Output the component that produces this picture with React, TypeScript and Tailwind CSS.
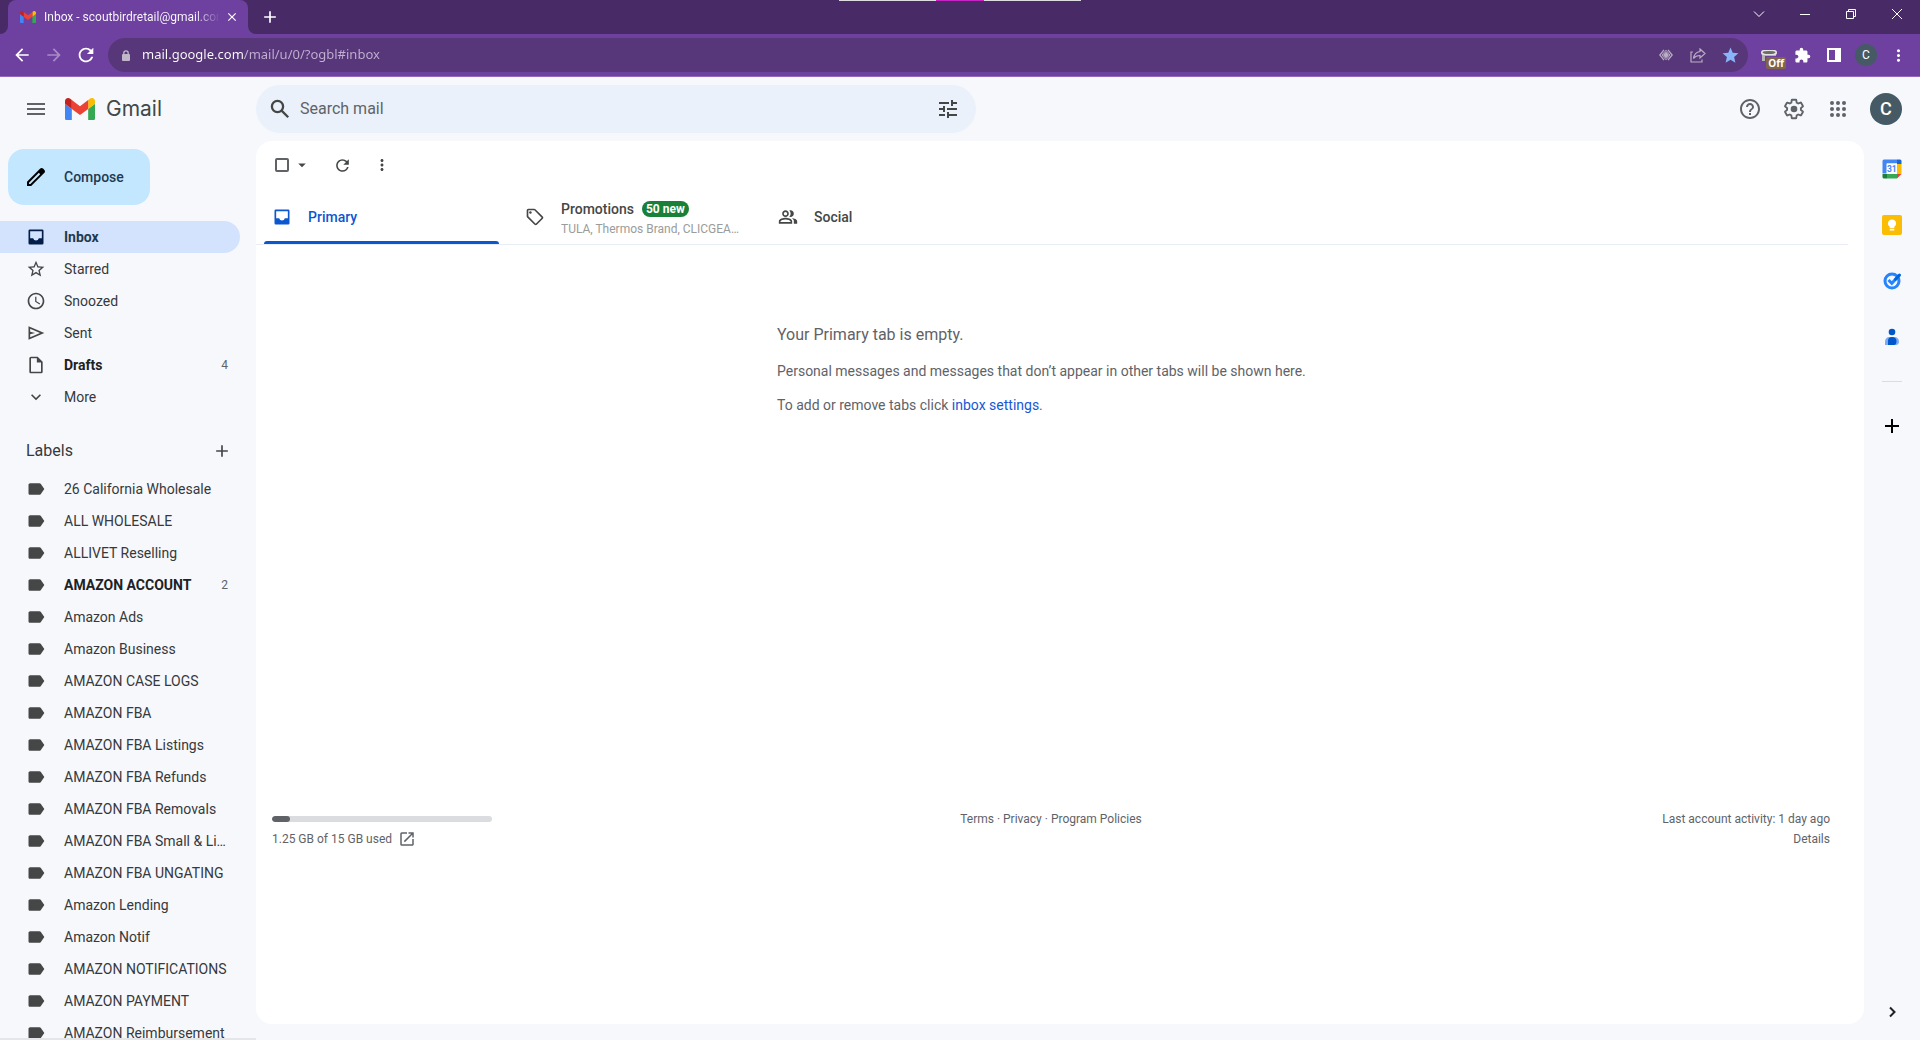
import React from "react";
import {
  MdAdd,
  MdArrowBack,
  MdArrowDropDown,
  MdArrowForward,
  MdClose,
  MdExtension,
  MdHelpOutline,
  MdKeyboardArrowDown,
  MdLabel,
  MdMenu,
  MdMoreVert,
  MdOpenInNew,
  MdOutlineInsertDriveFile,
  MdOutlinePeopleAlt,
  MdOutlineSell,
  MdRefresh,
  MdSchedule,
  MdStar,
  MdStarBorder,
  MdTune,
} from "react-icons/md";

type IconProps = { size?: number; className?: string };

function InboxIcon({ size = 20, className }: IconProps) {
  return (
    <svg width={size} height={size} viewBox="0 0 24 24" fill="currentColor" className={className}>
      <path d="M19.500 3h-15A1.500 1.500 0 003 4.500v15A1.500 1.500 0 004.500 21h15a1.500 1.500 0 001.500-1.500v-15A1.500 1.500 0 0019.500 3zM19 13.500h-3.600a3.500 3.500 0 01-6.800 0H5V5h14z" />
    </svg>
  );
}

function SendIcon({ size = 20, className }: IconProps) {
  return (
    <svg width={size} height={size} viewBox="0 0 24 24" fill="currentColor" className={className}>
      <path d="M3 20V4l19 8zm2-3l11.850-5L5 7v3.500l6 1.500-6 1.500z" />
    </svg>
  );
}

function SearchIcon({ size = 24 }: IconProps) {
  return (
    <svg width={size} height={size} viewBox="0 0 24 24" fill="none" stroke="currentColor" strokeWidth="2.300">
      <circle cx="9.500" cy="9.500" r="5.600" />
      <path d="M13.600 13.600l6.600 6.600" />
    </svg>
  );
}

function SettingsIcon({ size = 24 }: IconProps) {
  return (
    <svg width={size} height={size} viewBox="-1 -1 26 26" fill="currentColor">
      <path
        fill="none"
        stroke="currentColor"
        strokeWidth="2"
        d="M19.430 12.980c.04-.32.07-.64.07-.98 0-.34-.03-.66-.07-.98l2.110-1.650c.19-.15.24-.42.12-.64l-2-3.460a.5.5 0 00-.61-.22l-2.490 1c-.52-.4-1.080-.73-1.690-.98l-.38-2.650A.488.488 0 0014 2h-4c-.25 0-.46.18-.49.42l-.38 2.650c-.61.25-1.170.59-1.690.98l-2.490-1a.566.566 0 00-.18-.03c-.17 0-.34.09-.43.25l-2 3.460c-.13.22-.07.49.12.64l2.110 1.650c-.04.32-.07.65-.07.98 0 .33.03.66.07.98l-2.110 1.650c-.19.15-.24.42-.12.64l2 3.460a.5.5 0 00.61.22l2.490-1c.52.4 1.080.73 1.690.98l.38 2.650c.03.24.24.42.49.42h4c.25 0 .46-.18.49-.42l.38-2.650c.61-.25 1.170-.59 1.690-.98l2.490 1c.06.02.12.03.18.03.17 0 .34-.09.43-.25l2-3.460c.12-.22.07-.49-.12-.64z"
      />
      <circle cx="12" cy="12" r="3.600" />
    </svg>
  );
}

const folders = [
  { name: "Inbox", icon: InboxIcon, active: true },
  { name: "Starred", icon: MdStarBorder },
  { name: "Snoozed", icon: MdSchedule },
  { name: "Sent", icon: SendIcon },
  { name: "Drafts", icon: MdOutlineInsertDriveFile, count: 4 },
  { name: "More", icon: MdKeyboardArrowDown },
];

const labels = [
  { name: "26 California Wholesale" },
  { name: "ALL WHOLESALE" },
  { name: "ALLIVET Reselling" },
  { name: "AMAZON ACCOUNT", count: 2 },
  { name: "Amazon Ads" },
  { name: "Amazon Business" },
  { name: "AMAZON CASE LOGS" },
  { name: "AMAZON FBA" },
  { name: "AMAZON FBA Listings" },
  { name: "AMAZON FBA Refunds" },
  { name: "AMAZON FBA Removals" },
  { name: "AMAZON FBA Small & Light" },
  { name: "AMAZON FBA UNGATING" },
  { name: "Amazon Lending" },
  { name: "Amazon Notif" },
  { name: "AMAZON NOTIFICATIONS" },
  { name: "AMAZON PAYMENT" },
  { name: "AMAZON Reimbursement" },
];

function GmailLogo({ className }: { className?: string }) {
  return (
    <svg viewBox="52 42 88 66" className={className} aria-hidden="true">
      <path fill="#4285f4" d="M58 108h14V74L52 59v43c0 3.320 2.690 6 6 6" />
      <path fill="#34a853" d="M120 108h14c3.320 0 6-2.690 6-6V59l-20 15" />
      <path fill="#fbbc04" d="M120 48v26l20-15v-8c0-7.420-8.470-11.650-14.400-7.200" />
      <path fill="#ea4335" d="M72 74V48l24 18 24-18v26L96 92" />
      <path fill="#c5221f" d="M52 51v8l20 15V48l-5.600-4.200c-5.940-4.450-14.400-.22-14.400 7.200" />
    </svg>
  );
}

function IconButton({
  label,
  className = "",
  children,
}: {
  label: string;
  className?: string;
  children: React.ReactNode;
}) {
  return (
    <button aria-label={label} className={`flex shrink-0 items-center justify-center ${className}`}>
      {children}
    </button>
  );
}

function TabStrip() {
  return (
    <div className="relative flex h-[34px] items-stretch bg-[#472a66] text-white">
      {/* Share indicator hanging from the top edge */}
      <div className="absolute top-0 left-1/2 flex h-px w-[242px] -translate-x-1/2 justify-center bg-[#dfdbe2]">
        <span className="w-12 bg-[#c724c4]" />
      </div>
      <div className="flex w-2 bg-[#6e41a0]">
        <span className="flex-1 rounded-br-lg bg-[#472a66]" />
      </div>
      <div className="flex w-60 items-center rounded-t-lg bg-[#6e41a0] pr-2 pl-3">
        <GmailLogo className="w-4 shrink-0" />
        <span className="ml-2 flex-1 overflow-hidden bg-linear-to-r from-white from-85% to-transparent bg-clip-text text-xs whitespace-nowrap text-transparent">
          Inbox - scoutbirdretail@gmail.com
        </span>
        <IconButton label="Close tab" className="ml-1 size-4">
          <MdClose size={14} />
        </IconButton>
      </div>
      <div className="flex w-2 bg-[#6e41a0]">
        <span className="flex-1 rounded-bl-lg bg-[#472a66]" />
      </div>
      <IconButton label="New tab" className="w-7">
        <MdAdd size={20} />
      </IconButton>
      <div className="ml-auto flex">
        <IconButton label="Search tabs" className="h-7 w-[46px]">
          <svg width="12" height="12" viewBox="0 0 12 12" fill="none" stroke="currentColor">
            <path d="M1 3.500l5 5 5-5" />
          </svg>
        </IconButton>
        <IconButton label="Minimize" className="h-7 w-[46px]">
          <svg width="10" height="10" viewBox="0 0 10 10" stroke="currentColor">
            <path d="M0 5.500h10" />
          </svg>
        </IconButton>
        <IconButton label="Restore" className="h-7 w-[46px]">
          <svg width="10" height="10" viewBox="0 0 10 10" fill="none" stroke="currentColor">
            <path d="M.5 2.500h7v7h-7zM2.500 2.500v-2h7v7h-2" />
          </svg>
        </IconButton>
        <IconButton label="Close" className="h-7 w-[46px]">
          <svg width="10" height="10" viewBox="0 0 10 10" fill="none" stroke="currentColor">
            <path d="M0 0l10 10M10 0L0 10" />
          </svg>
        </IconButton>
      </div>
    </div>
  );
}

function AddressBar() {
  return (
    <div className="flex h-[43px] items-center border-b border-[#9168bd] bg-[#6e41a0] pr-[6px] text-white">
      <IconButton label="Back" className="ml-2 size-7">
        <MdArrowBack size={20} />
      </IconButton>
      <IconButton label="Forward" className="ml-1 size-7 text-[#a88cc6]">
        <MdArrowForward size={20} />
      </IconButton>
      <IconButton label="Reload" className="ml-1 size-7">
        <MdRefresh size={22} />
      </IconButton>
      <div className="ml-2 flex h-[34px] flex-1 items-center rounded-full bg-[#573779] pr-[2px] pl-[14px]">
        <svg width="8" height="11" viewBox="0 0 8 11" className="shrink-0 text-[#c0b8c8]">
          <rect y="4" width="8" height="7" rx="1" fill="currentColor" />
          <path d="M1.800 4.500V3a2.200 2.200 0 014.400 0v1.500" fill="none" stroke="currentColor" strokeWidth="1.300" />
        </svg>
        {/* Host part in white, path dimmed */}
        <input
          aria-label="Address"
          defaultValue="mail.google.com/mail/u/0/?ogbl#inbox"
          className="ml-3 flex-1 bg-linear-to-r from-white from-[102px] to-[#c2b1d3] to-[102px] bg-clip-text font-['Noto_Sans',sans-serif] text-[13px] text-transparent outline-none"
        />
        <IconButton label="Preview" className="size-8 text-[#b9aec4]">
          <svg width="14" height="12" viewBox="0 0 14 12" fill="none" stroke="currentColor">
            <path d="M5 .8L.8 6 5 11.200M9 .8L13.200 6 9 11.200" strokeWidth="1.200" />
            <path d="M7 1.200L3 6l4 4.800L11 6z" strokeWidth="1" />
            <path d="M7 2.500L4 6l3 3.500L10 6z" fill="currentColor" stroke="none" />
          </svg>
        </IconButton>
        <IconButton label="Share this page" className="size-8 text-[#b9aec4]">
          <svg width="16" height="15" viewBox="0 0 16 15" fill="none" stroke="currentColor" strokeWidth="1.200">
            <path d="M3 4H1v10h11v-2.500" />
            <path d="M10 1l5 4.500-5 4.500V7.500c-3 0-5 1-6.500 3C4 7 6 4 10 3.500z" />
          </svg>
        </IconButton>
        <IconButton label="Bookmark" className="size-8 text-[#8ab4f8]">
          <MdStar size={19} />
        </IconButton>
      </div>
      <button aria-label="Extension, off" className="relative ml-1 flex h-9 w-[34px] items-center justify-center">
        <svg width="18" height="14" viewBox="0 0 18 14">
          <path d="M2 4h14v4H5v5H2z" fill="#b8b4b4" />
          <rect x="1" y="2" width="16" height="5" rx="2.500" fill="#e4e4e4" />
          <ellipse cx="9" cy="4.500" rx="6.500" ry="1.600" fill="#6d6d66" />
        </svg>
        <span className="absolute right-0 bottom-1 rounded-xs bg-[#80654a] px-[2px] font-['Open_Sans',sans-serif] text-[10px] leading-3 font-bold">
          Off
        </span>
      </button>
      <IconButton label="Extensions" className="size-8">
        <MdExtension size={17} />
      </IconButton>
      <IconButton label="Side panel" className="size-8">
        <svg width="14" height="14" viewBox="0 0 14 14" fill="currentColor">
          <path fillRule="evenodd" d="M0 0h14v14H0zM2 2v10h6V2z" />
        </svg>
      </IconButton>
      <IconButton label="Profile" className="size-8">
        <span className="flex size-[22px] items-center justify-center rounded-full bg-[#455a64] text-xs">C</span>
      </IconButton>
      <IconButton label="Browser menu" className="size-8">
        <MdMoreVert size={19} />
      </IconButton>
    </div>
  );
}

function Header() {
  return (
    <header className="flex h-16 shrink-0 items-center text-[#5f6368]">
      <div className="flex w-64 shrink-0 items-center pl-6">
        <IconButton label="Main menu" className="size-6">
          <MdMenu size={24} />
        </IconButton>
        <a href="#inbox" className="ml-[17px] flex items-center gap-[11px]">
          <GmailLogo className="w-[30px]" />
          <span className="font-['Inter',sans-serif] text-[21px] text-[#444746]">Gmail</span>
        </a>
      </div>
      <form className="flex h-12 w-[720px] items-center rounded-full bg-[#eaf1fb] pr-4 pl-3 text-[#444746]">
        <IconButton label="Search" className="size-6">
          <SearchIcon />
        </IconButton>
        <input
          aria-label="Search mail"
          placeholder="Search mail"
          className="ml-2 flex-1 bg-transparent text-base outline-none placeholder:text-[#5f6368]"
        />
        <IconButton label="Show search options" className="size-6">
          <MdTune size={24} />
        </IconButton>
      </form>
      <div className="ml-auto flex items-center gap-5 pr-[18px]">
        <IconButton label="Support" className="size-6">
          <MdHelpOutline size={24} />
        </IconButton>
        <IconButton label="Settings" className="size-6">
          <SettingsIcon />
        </IconButton>
        <IconButton label="Google apps" className="size-6">
          <svg width="24" height="24" viewBox="0 0 24 24" fill="currentColor">
            {[6, 12, 18].map((y) => [6, 12, 18].map((x) => <circle key={`${x}-${y}`} cx={x} cy={y} r="2" />))}
          </svg>
        </IconButton>
        <button
          aria-label="Google Account"
          className="flex size-8 items-center justify-center rounded-full bg-[#455a64] text-lg font-medium text-white"
        >
          C
        </button>
      </div>
    </header>
  );
}

function Sidebar() {
  return (
    <aside className="flex w-64 shrink-0 flex-col overflow-hidden border-b-2 border-[#e4e6ea] pt-2 text-sm text-[#36393c]">
      <button className="ml-2 flex h-14 w-[142px] shrink-0 items-center gap-4 rounded-2xl bg-[#c2e7ff] pl-4 font-medium text-[#1f3a50]">
        <svg width="24" height="24" viewBox="0 0 24 24" fill="#000">
          <path d="M20.410 4.940l-1.350-1.350c-.78-.78-2.050-.78-2.830 0L3 16.820V21h4.180L20.410 7.770c.79-.78.79-2.050 0-2.830zM6.410 19.060L5 19v-1.360l9.820-9.820 1.410 1.410-9.820 9.830z" />
        </svg>
        Compose
      </button>
      <nav className="mt-4 shrink-0" aria-label="Folders">
        {folders.map(({ name, icon: Icon, active, count }) => (
          <a
            key={name}
            href={`#${name.toLowerCase()}`}
            className={`mr-4 flex h-8 items-center pr-3 pl-[26px] ${
              active ? "rounded-r-full bg-[#d3e3fd] font-bold text-[#1f3a50]" : count ? "font-bold text-[#202124]" : ""
            }`}
          >
            <Icon size={20} className={active ? "text-[#041e49]" : "text-[#444746]"} />
            <span className="ml-[18px] flex-1">{name}</span>
            {count && <span className="text-xs font-normal text-[#5f6368]">{count}</span>}
          </a>
        ))}
      </nav>
      <div className="mt-4 flex h-11 shrink-0 items-center justify-between pr-6 pl-[26px]">
        <h2 className="text-base">Labels</h2>
        <IconButton label="Create new label" className="size-5 text-[#444746]">
          <MdAdd size={20} />
        </IconButton>
      </div>
      <nav className="min-h-0 flex-1 overflow-hidden" aria-label="Labels">
        {labels.map(({ name, count }) => (
          <a
            key={name}
            href="#label"
            className={`mr-4 flex h-8 items-center pr-3 pl-[26px] ${count ? "font-bold text-[#202124]" : ""}`}
          >
            <MdLabel size={20} className="shrink-0 text-[#444746]" />
            <span className="ml-[18px] flex-1 truncate">{name}</span>
            {count && <span className="text-xs font-normal text-[#5f6368]">{count}</span>}
          </a>
        ))}
      </nav>
    </aside>
  );
}

function Mailbox() {
  return (
    <main className="mb-4 flex min-w-0 flex-1 flex-col rounded-2xl bg-white text-[#444746]">
      <div className="flex h-12 shrink-0 items-center pl-[19px]">
        <input
          type="checkbox"
          aria-label="Select"
          className="size-[14px] appearance-none rounded-xs border-2 border-[#5f6368]"
        />
        <IconButton label="Select options" className="ml-[3px] size-5">
          <MdArrowDropDown size={18} />
        </IconButton>
        <IconButton label="Refresh" className="ml-5 size-5">
          <MdRefresh size={19} />
        </IconButton>
        <IconButton label="More" className="ml-5 size-5">
          <MdMoreVert size={18} />
        </IconButton>
      </div>
      <div role="tablist" className="mr-4 flex h-14 shrink-0 border-b border-[#e9eef6] text-sm font-medium">
        <button role="tab" aria-selected="true" className="flex w-[253px] flex-col pt-[3px] pl-2 text-[#0b57d0]">
          <span className="flex flex-1 items-center gap-4 pl-2">
            <InboxIcon />
            Primary
          </span>
          <span className="h-[3px] w-[235px] rounded-t-sm bg-[#0b57d0]" />
        </button>
        <button role="tab" aria-selected="false" className="flex w-[253px] items-center gap-4 pl-4 text-left">
          <MdOutlineSell size={20} className="shrink-0" />
          <span className="min-w-0 flex-1 pt-1">
            <span className="flex items-center gap-2 leading-5">
              Promotions
              <span className="rounded-full bg-[#188038] px-1 text-xs leading-4 font-bold text-white">50 new</span>
            </span>
            <span className="block w-[184px] truncate text-xs leading-5 font-normal text-[#9a9c9b]">
              TULA, Thermos Brand, CLICGEAR, Zappos
            </span>
          </span>
        </button>
        <button role="tab" aria-selected="false" className="flex w-[253px] items-center gap-4 pl-4">
          <MdOutlinePeopleAlt size={20} />
          Social
        </button>
      </div>
      <section className="flex h-[560px] shrink-0 flex-col items-center pt-[78px] pr-[26px] text-sm text-[#5f6368]">
        <div className="w-[540px] space-y-[14px]">
          <p className="text-base leading-6">Your Primary tab is empty.</p>
          <p>Personal messages and messages that don’t appear in other tabs will be shown here.</p>
          <p>
            To add or remove tabs click{" "}
            <a href="#settings" className="text-[#1558d6]">
              inbox settings
            </a>
            .
          </p>
        </div>
      </section>
      <footer className="grid grid-cols-3 pt-1 pr-[34px] pl-4 text-xs leading-5 text-[#5f6368]">
        <div>
          <div className="mt-[7px] h-[6px] w-[220px] overflow-hidden rounded-full bg-[#dadce0]">
            <div className="h-full rounded-full bg-[#5f6368]" style={{ width: `${(1.25 / 15) * 100}%` }} />
          </div>
          <div className="mt-[7px] flex items-center gap-[6px]">
            <span>1.25 GB of 15 GB used</span>
            <a href="#storage" aria-label="Manage storage">
              <MdOpenInNew size={18} />
            </a>
          </div>
        </div>
        <p className="text-center">
          <a href="#terms">Terms</a> · <a href="#privacy">Privacy</a> · <a href="#policies">Program Policies</a>
        </p>
        <div className="text-right">
          <p>Last account activity: 1 day ago</p>
          <a href="#details">Details</a>
        </div>
      </footer>
    </main>
  );
}

function SidePanel() {
  return (
    <aside className="flex w-14 shrink-0 flex-col items-center pt-[18px] pb-[18px]">
      <IconButton label="Calendar" className="size-5">
        <svg width="20" height="20" viewBox="0 0 20 20">
          <path d="M2 .5h13v4H5v10H.5V2A1.500 1.500 0 012 .5z" fill="#4285f4" />
          <path d="M15 .5h3A1.500 1.500 0 0119.500 2v3H15z" fill="#1967d2" />
          <path d="M15 5h4.500v10H15z" fill="#fbbc04" />
          <path d="M5 15h10v4.500H5z" fill="#34a853" />
          <path d="M.5 15H5v4.500H2A1.500 1.500 0 01.5 18z" fill="#188038" />
          <path d="M15 15h4.500L15 19.500z" fill="#ea4335" />
          <path d="M4.500 4.500H15V15H4.500z" fill="#fff" />
          <text x="9.800" y="13" fontSize="8.500" fontWeight="700" textAnchor="middle" fill="#4285f4">
            31
          </text>
        </svg>
      </IconButton>
      <IconButton label="Keep" className="mt-9 size-5">
        <svg width="20" height="20" viewBox="0 0 20 20">
          <rect width="20" height="20" rx="2" fill="#fbbc04" />
          <path d="M10 4.500a4 4 0 00-2.300 7.300v1.400h4.600v-1.400A4 4 0 0010 4.500zM7.700 14h4.600v1.500H7.700z" fill="#fff" />
        </svg>
      </IconButton>
      <IconButton label="Tasks" className="mt-9 size-5">
        <svg width="20" height="20" viewBox="0 0 20 20" fill="none">
          <circle cx="10" cy="10" r="7" stroke="#2684fc" strokeWidth="3" />
          <path d="M6.500 9l3.300 3.300 7.500-8" stroke="#2684fc" strokeWidth="3" />
          <path d="M13.500 8.300l4-4.300" stroke="#0066da" strokeWidth="3" strokeLinecap="round" />
        </svg>
      </IconButton>
      <IconButton label="Contacts" className="mt-9 size-5">
        <svg width="20" height="20" viewBox="0 0 20 20">
          <circle cx="10" cy="5" r="3.300" fill="#0057cc" />
          <path d="M3 18v-3.500A4.500 4.500 0 017.500 10h5a4.500 4.500 0 014.500 4.500c0 2-1.200 3.500-3 3.500z" fill="#7baaf7" />
          <path d="M6 18v-4c0-2.500 1.500-4 4-4s4.500 1.500 4.500 4c0 2.500-1 4-2.500 4z" fill="#0057cc" />
        </svg>
      </IconButton>
      <hr className="mt-[34px] w-5 border-[#dadce0]" />
      <IconButton label="Get add-ons" className="mt-[34px] size-5 text-black">
        <MdAdd size={24} className="shrink-0" />
      </IconButton>
      <IconButton label="Hide side panel" className="mt-auto size-5 text-[#202124]">
        <svg width="20" height="20" viewBox="0 0 20 20" fill="none" stroke="currentColor" strokeWidth="2">
          <path d="M8 5.500l4.500 4.500L8 14.500" />
        </svg>
      </IconButton>
    </aside>
  );
}

export default function App() {
  return (
    <div className="flex h-screen flex-col overflow-hidden bg-[#f6f8fc] font-['Roboto',sans-serif]">
      <TabStrip />
      <AddressBar />
      <Header />
      <div className="flex min-h-0 flex-1">
        <Sidebar />
        <Mailbox />
        <SidePanel />
      </div>
    </div>
  );
}
